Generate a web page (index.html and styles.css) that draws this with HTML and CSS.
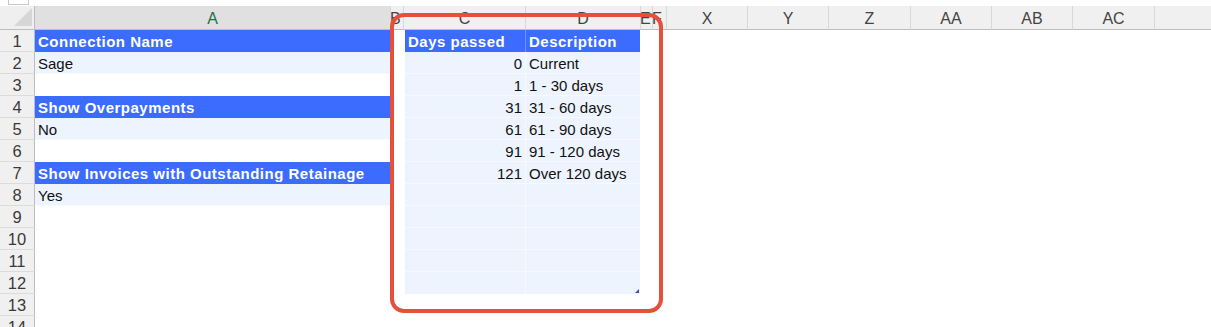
FILE: index.html
```html
<!DOCTYPE html>
<html>
<head>
<meta charset="utf-8">
<link rel="stylesheet" href="styles.css">
</head>
<body>
<div class="topbar"><div class="namebox"></div></div>
<div class="sheet">
  <div class="corner"><svg width="20" height="20" viewBox="0 0 20 20"><polygon points="19,1 19,19 1,19" fill="#d6d6d6"/></svg></div>
  <div class="colhead sel">A</div>
  <div class="colhead narrow">B</div>
  <div class="colhead">C</div>
  <div class="colhead">D</div>
  <div class="colhead narrow">E</div>
  <div class="colhead narrow">F</div>
  <div class="colhead">X</div>
  <div class="colhead">Y</div>
  <div class="colhead">Z</div>
  <div class="colhead">AA</div>
  <div class="colhead">AB</div>
  <div class="colhead">AC</div>
  <div class="colhead last"></div>

  <div class="rownum">1</div><div class="cell hdr">Connection Name</div><div class="cell"></div><div class="cell hdr tc">Days passed</div><div class="cell hdr td">Description</div><div class="fill"></div>
  <div class="rownum">2</div><div class="cell band">Sage</div><div class="cell"></div><div class="cell band tc num">0</div><div class="cell band td">Current</div><div class="fill"></div>
  <div class="rownum">3</div><div class="cell"></div><div class="cell"></div><div class="cell band tc num">1</div><div class="cell band td">1 - 30 days</div><div class="fill"></div>
  <div class="rownum">4</div><div class="cell hdr">Show Overpayments</div><div class="cell"></div><div class="cell band tc num">31</div><div class="cell band td">31 - 60 days</div><div class="fill"></div>
  <div class="rownum">5</div><div class="cell band">No</div><div class="cell"></div><div class="cell band tc num">61</div><div class="cell band td">61 - 90 days</div><div class="fill"></div>
  <div class="rownum">6</div><div class="cell"></div><div class="cell"></div><div class="cell band tc num">91</div><div class="cell band td">91 - 120 days</div><div class="fill"></div>
  <div class="rownum">7</div><div class="cell hdr">Show Invoices with Outstanding Retainage</div><div class="cell"></div><div class="cell band tc num">121</div><div class="cell band td">Over 120 days</div><div class="fill"></div>
  <div class="rownum">8</div><div class="cell band">Yes</div><div class="cell"></div><div class="cell band tc"></div><div class="cell band td"></div><div class="fill"></div>
  <div class="rownum">9</div><div class="cell"></div><div class="cell"></div><div class="cell band tc"></div><div class="cell band td"></div><div class="fill"></div>
  <div class="rownum">10</div><div class="cell"></div><div class="cell"></div><div class="cell band tc"></div><div class="cell band td"></div><div class="fill"></div>
  <div class="rownum">11</div><div class="cell"></div><div class="cell"></div><div class="cell band tc"></div><div class="cell band td"></div><div class="fill"></div>
  <div class="rownum">12</div><div class="cell"></div><div class="cell"></div><div class="cell band tc lastrow"></div><div class="cell band td lastrow"><span class="handle"></span></div><div class="fill"></div>
  <div class="rownum">13</div><div class="cell"></div><div class="cell"></div><div class="cell"></div><div class="cell"></div><div class="fill"></div>
  <div class="rownum">14</div><div class="cell"></div><div class="cell"></div><div class="cell"></div><div class="cell"></div><div class="fill"></div>

  <div class="highlight"></div>
</div>
</body>
</html>
```

FILE: styles.css
```css
html, body {
  margin: 0;
  padding: 0;
  background: #ffffff;
  overflow: hidden;
}
body {
  width: 1211px;
  height: 327px;
  font-family: "Liberation Sans", Arial, sans-serif;
  color: #111;
}
.topbar {
  height: 6px;
  display: flex;
  align-items: flex-start;
  padding-left: 8px;
  box-sizing: border-box;
}
.namebox {
  width: 21px;
  height: 5px;
  border: 1px solid #c9c9c9;
  border-top: none;
  box-sizing: border-box;
  background: #fff;
}
.sheet {
  position: relative;
  display: grid;
  grid-template-columns: 35px 356px 13px 122px 115px 12px 14px 81px 81px 82px 81px 81px 82px 1fr;
  grid-template-rows: 24px repeat(14, 22px);
}
.corner {
  background: #efefef;
  border-right: 1px solid #bdbdbd;
  border-bottom: 1px solid #bdbdbd;
  box-sizing: border-box;
  display: flex;
  align-items: flex-end;
  justify-content: flex-end;
  padding: 0 1px 2px 0;
}
.colhead {
  background: #f0f0f0;
  border-right: 1px solid #d8d8d8;
  border-bottom: 1px solid #bdbdbd;
  box-sizing: border-box;
  font-size: 16px;
  color: #444;
  text-align: center;
  line-height: 25px;
  overflow: hidden;
}
.colhead.sel {
  background: #e0e0e0;
  color: #1e7145;
}
.colhead.narrow {
  text-align: left;
  text-indent: -1px;
}
.colhead.last {
  border-right: none;
}
.rownum {
  background: #f0f0f0;
  border-right: 1px solid #bdbdbd;
  border-bottom: 1px solid #dcdcdc;
  box-sizing: border-box;
  font-size: 16.5px;
  color: #3a3a3a;
  text-align: center;
  line-height: 23px;
}
.cell {
  box-sizing: border-box;
  font-size: 15px;
  line-height: 23px;
  padding-left: 3px;
  white-space: nowrap;
  overflow: visible;
  position: relative;
}
.fill {
  grid-column: span 9;
}
.hdr {
  background: #3b6cfd;
  color: #fff;
  font-weight: bold;
  letter-spacing: 0.5px;
}
.band {
  background: #edf4fe;
  border-bottom: 1px solid #f6f9ff;
}
.tc {
  margin-left: 1px;
  border-right: 1px solid #f6f9ff;
}
.hdr.tc {
  border-right: 1px solid #6f93fb;
}
.td {
  margin-right: 1px;
}
.num {
  text-align: right;
  padding-right: 3px;
}
.lastrow {
  border-bottom: none;
}
.handle {
  position: absolute;
  right: 1px;
  bottom: 1px;
  width: 4px;
  height: 4px;
  background: #3b52b5;
  clip-path: polygon(100% 0, 100% 100%, 0 100%);
}
.highlight {
  position: absolute;
  left: 390px;
  top: 7px;
  width: 273px;
  height: 300px;
  box-sizing: border-box;
  border: 4px solid #e4503b;
  border-radius: 14px;
  pointer-events: none;
}
```
